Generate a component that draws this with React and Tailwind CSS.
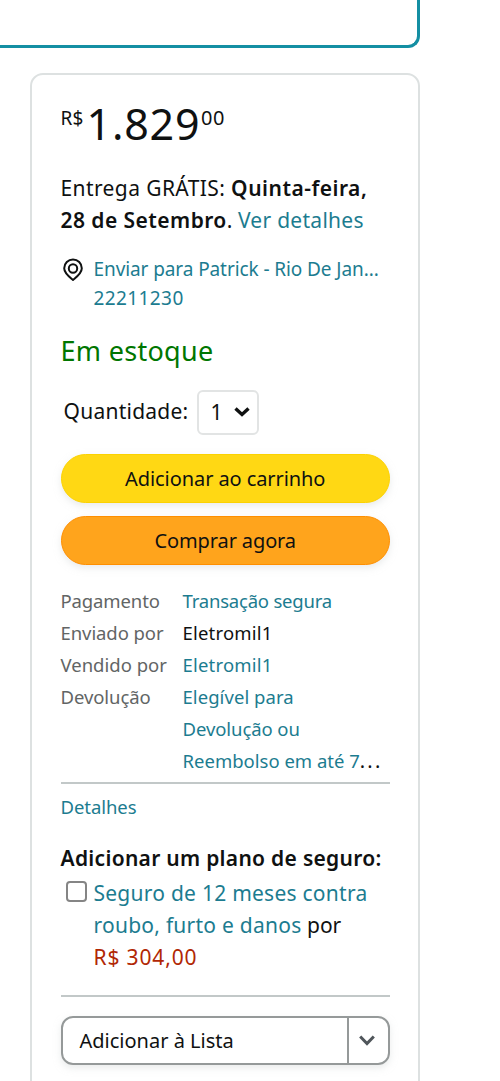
const Link = ({ className = '', children }) => (
  <span className={`text-[#1c7c90] ${className}`}>{children}</span>
);

const Row = ({ label, labelClass = '', children }) => (
  <div className="flex">
    <div className={`w-[122px] shrink-0 text-[#626565] ${labelClass}`}>{label}</div>
    <div>{children}</div>
  </div>
);

export default function App() {
  return (
    <div className="h-[1081px] w-[500px] overflow-hidden bg-white font-['Noto_Sans',sans-serif] text-[#0f1111] whitespace-nowrap">
      <div className="h-12 w-[420px] rounded-br-[12px] border-r-[3px] border-b-[3px] border-[#148fa3]" />

      <div className="mt-[25px] ml-[30px] h-[1060px] w-[390px] rounded-[13px] border-2 border-[#dde1e1] pt-[25px] pr-7 pl-[28.5px]">
        <div className="flex h-12 items-start text-[19px] leading-[36px]">
          <span className="w-[26px] tracking-[0.3px]">R$</span>
          <span className="w-[114.5px] text-[43px] leading-[48px] tracking-[0.8px]">1.829</span>
          <span className="text-[20px] tracking-[0.6px]">00</span>
        </div>

        <div className="mt-6 text-[21px] leading-8">
          <div>
            <span className="tracking-[0.4px]">Entrega GRÁTIS: </span>
            <b className="font-semibold tracking-[0.5px]">Quinta-feira,</b>
          </div>
          <div>
            <b className="font-semibold tracking-[0.45px]">28 de Setembro</b>. <Link className="tracking-[0.28px]">Ver detalhes</Link>
          </div>
        </div>

        <div className="mt-[19px] flex text-[19px] leading-[29px]">
          <svg className="mt-[3px] ml-[2.5px] mr-[10.5px] h-6 w-5 shrink-0" viewBox="0 0 20 24" fill="none" stroke="#0f1111" strokeWidth="2">
            <path d="M10 22C6.8 19.3 1.2 15.4 1.2 10.3A8.8 8.8 0 0 1 18.8 10.3C18.8 15.4 13.2 19.3 10 22Z" strokeLinejoin="round" />
            <circle cx="10" cy="10.5" r="4.2" />
          </svg>
          <div>
            <Link className="block tracking-[-0.09px]">Enviar para Patrick - Rio De Jan...</Link>
            <Link className="block tracking-[0.4px]">22211230</Link>
          </div>
        </div>

        <div className="mt-5 text-[27px] leading-9 tracking-[0.3px] text-[#007600]">Em estoque</div>

        <div className="mt-[21px] flex h-11 items-center pl-[3px] text-[21px]">
          <span className="w-[133px] pb-[2px] leading-8 tracking-[0.25px]">Quantidade:</span>
          <div className="flex h-[45px] w-[62px] items-center justify-between rounded-[6px] border-2 border-[#e2e4e4] pr-[7px] pl-3">
            <span className="pt-px">1</span>
            <svg className="h-[10px] w-4" viewBox="0 0 16 10" fill="none" stroke="#0f1111" strokeWidth="3.4">
              <path d="M1.5 1.5 8 7.5 14.5 1.5" />
            </svg>
          </div>
        </div>

        <div className="mt-5 flex h-[49px] items-center justify-center rounded-full border border-[#fcd200] bg-[#ffd814] text-[20px] shadow-[0_3px_7px_rgba(213,217,217,0.5)]">
          <span className="tracking-[-0.08px]">Adicionar ao carrinho</span>
        </div>
        <div className="mt-[13px] flex h-[49px] items-center justify-center rounded-full border border-[#ff8f00] bg-[#ffa41c] text-[20px] shadow-[0_3px_7px_rgba(213,217,217,0.5)]">
          <span className="tracking-[-0.12px]">Comprar agora</span>
        </div>

        <div className="mt-5 text-[18.5px] leading-8">
          <Row label="Pagamento" labelClass="tracking-[-0.12px]">
            <Link className="tracking-[-0.2px]">Transação segura</Link>
          </Row>
          <Row label="Enviado por" labelClass="tracking-[-0.08px]">
            <span className="tracking-[0.2px]">Eletromil1</span>
          </Row>
          <Row label="Vendido por">
            <Link className="tracking-[0.2px]">Eletromil1</Link>
          </Row>
          <Row label="Devolução" labelClass="tracking-[-0.08px]">
            <Link className="block tracking-[0.06px]">Elegível para</Link>
            <Link className="block tracking-[-0.08px]">Devolução ou</Link>
            <div>
              <Link>Reembolso em até 7</Link>
              <span className="text-[20px] leading-none tracking-[2.2px]">...</span>
            </div>
          </Row>
        </div>
        <div className="mt-[5px] h-[2px] bg-[#c2c8c8]" />
        <div className="mt-[7px] text-[18.5px] leading-8 tracking-[-0.06px]">
          <Link>Detalhes</Link>
        </div>

        <div className="mt-[18.5px] text-[21px] leading-8 font-semibold tracking-[0.29px]">Adicionar um plano de seguro:</div>

        <div className="mt-[3px] flex text-[21px] leading-8">
          <div className="mt-1 mr-[7px] ml-[5px] h-[21px] w-[21px] shrink-0 rounded-[4px] border-2 border-[#858585]" />
          <div>
            <Link className="block tracking-[0.25px]">Seguro de 12 meses contra</Link>
            <div>
              <Link className="tracking-[0.25px]">roubo, furto e danos</Link> por
            </div>
            <div className="tracking-[0.85px] text-[#b12704]">R$ 304,00</div>
          </div>
        </div>

        <div className="mt-[22.5px] h-[2px] bg-[#c2c8c8]" />

        <div className="mt-[19px] flex h-[49px] rounded-[12px] border-2 border-[#959999] text-[20px] shadow-[0_3px_7px_rgba(213,217,217,0.5)]">
          <div className="flex flex-1 items-center pl-[17px]">Adicionar à Lista</div>
          <div className="flex w-[41px] items-center justify-center border-l-2 border-[#959999] pr-[3px]">
            <svg className="h-[11px] w-4" viewBox="0 0 16 11" fill="none" stroke="#50565b" strokeWidth="3">
              <path d="M1.2 1.5 8 8.5 14.8 1.5" />
            </svg>
          </div>
        </div>
      </div>
    </div>
  );
}
